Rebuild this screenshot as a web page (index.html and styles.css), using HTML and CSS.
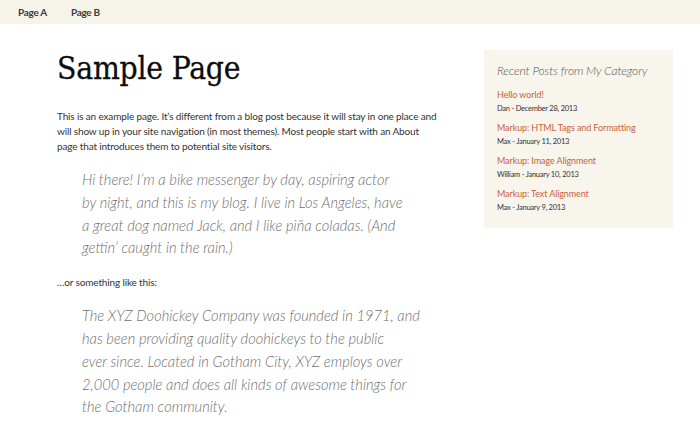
FILE: index.html
```html
<!DOCTYPE html>
<html>
<head>
<meta charset="utf-8">
<link rel="stylesheet" href="styles.css">
</head>
<body>
<nav class="topnav">
  <a class="nav-link" href="#">Page A</a>
  <a class="nav-link" href="#">Page B</a>
</nav>
<div class="layout">
  <main class="content">
    <h1 class="title">Sample Page</h1>
    <p class="para">This is an example page. It’s different from a blog post because it will stay in one place and will show up in your site navigation (in most themes). Most people start with an About page that introduces them to potential site visitors.</p>
    <blockquote class="quote">Hi there! I’m a bike messenger by day, aspiring actor<br>by night, and this is my blog. I live in Los Angeles, have<br>a great dog named Jack, and I like piña coladas. (And<br>gettin’ caught in the rain.)</blockquote>
    <p class="para">…or something like this:</p>
    <blockquote class="quote">The XYZ Doohickey Company was founded in 1971, and<br>has been providing quality doohickeys to the public<br>ever since. Located in Gotham City, XYZ employs over<br>2,000 people and does all kinds of awesome things for<br>the Gotham community.</blockquote>
  </main>
  <aside class="sidebar">
    <h2 class="widget-title">Recent Posts from My Category</h2>
    <ul class="posts">
      <li class="post"><a class="post-link" href="#">Hello world!</a><span class="meta">Dan - December 28, 2013</span></li>
      <li class="post"><a class="post-link" href="#">Markup: HTML Tags and Formatting</a><span class="meta">Max - January 11, 2013</span></li>
      <li class="post"><a class="post-link" href="#">Markup: Image Alignment</a><span class="meta">William - January 10, 2013</span></li>
      <li class="post"><a class="post-link" href="#">Markup: Text Alignment</a><span class="meta">Max - January 9, 2013</span></li>
    </ul>
  </aside>
</div>
</body>
</html>
```
FILE: styles.css
```css
* { box-sizing: border-box; }
html, body { margin: 0; padding: 0; background: #fff; }
body { font-family: Lato, "Open Sans", sans-serif; color: #333; overflow: hidden; }

.topnav {
  height: 24px;
  background: #f6f4e8;
  display: flex;
  align-items: center;
  gap: 24px;
  padding: 0 0 1px 18px;
}
.nav-link {
  font-size: 10px;
  font-weight: 700;
  color: #3a3a3a;
  text-decoration: none;
  letter-spacing: -0.3px;
}

.layout {
  display: flex;
  padding: 26px 27px 0 57px;
  gap: 47px;
}
.content { width: 380px; flex: none; }
.title {
  font-family: "DejaVu Serif Condensed", "DejaVu Serif", serif;
  font-stretch: semi-condensed;
  font-weight: 400;
  font-size: 31.5px;
  line-height: 36px;
  letter-spacing: -0.2px;
  margin: 0 0 23px;
  color: #0d0d0d;
  -webkit-text-stroke: 0.3px #0d0d0d;
}
.para {
  font-size: 10px;
  line-height: 15px;
  margin: 0 0 14px;
  color: #333;
  letter-spacing: -0.15px;
}
.quote {
  margin: 0 0 16px 25px;
  font-style: italic;
  font-weight: 300;
  font-size: 14.7px;
  line-height: 22.8px;
  color: #6f6f6f;
  white-space: nowrap;
}

.sidebar {
  width: 189px;
  height: 178px;
  flex: none;
  background: #f7f5ec;
  padding: 13px 13px;
}
.widget-title {
  margin: 0 0 10px;
  font-size: 12px;
  font-weight: 300;
  font-style: italic;
  color: #555;
  line-height: 16px;
  letter-spacing: -0.1px;
}
.posts { list-style: none; margin: 0; padding: 0; display: flex; flex-direction: column; gap: 8px; }
.post { display: flex; flex-direction: column; gap: 2px; }
.post-link {
  font-size: 9px;
  color: #c8643c;
  text-decoration: none;
  line-height: 12px;
  letter-spacing: -0.1px;
}
.meta {
  font-size: 7.5px;
  color: #333;
  line-height: 11px;
  letter-spacing: -0.25px;
}
```
